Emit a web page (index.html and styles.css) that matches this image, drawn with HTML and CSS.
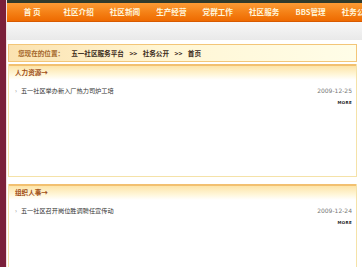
FILE: index.html
```html
<!DOCTYPE html>
<html lang="zh">
<head>
<meta charset="utf-8">
<title>五一社区服务平台 - 社务公开</title>
<link rel="stylesheet" href="styles.css">
</head>
<body>
<div class="page">
  <div class="strip"></div>
  <div class="main">
    <div class="banner"></div>
    <nav class="nav">
      <a class="nav-item">首&nbsp;页</a>
      <a class="nav-item">社区介绍</a>
      <a class="nav-item">社区新闻</a>
      <a class="nav-item">生产经营</a>
      <a class="nav-item">党群工作</a>
      <a class="nav-item">社区服务</a>
      <a class="nav-item">BBS管理</a>
      <a class="nav-item">社务公开</a>
    </nav>
    <div class="subbar"></div>
    <div class="content">
      <div class="crumb">
        <span class="crumb-label">您现在的位置：</span>
        <span class="crumb-path">五一社区服务平台 &gt;&gt; 社务公开 &gt;&gt; 首页</span>
      </div>
      <section class="box box-first">
        <div class="box-head">人力资源→</div>
        <div class="item">
          <span class="item-title"><span class="bullet">›</span>五一社区举办新入厂热力司炉工培</span>
          <span class="item-date">2009-12-25</span>
        </div>
        <div class="more-row"><span class="more">MORE</span></div>
      </section>
      <section class="box box-second">
        <div class="box-head">组织人事→</div>
        <div class="item">
          <span class="item-title"><span class="bullet">›</span>五一社区召开岗位胜调聘任宣传动</span>
          <span class="item-date">2009-12-24</span>
        </div>
        <div class="more-row"><span class="more">MORE</span></div>
      </section>
    </div>
  </div>
</div>
</body>
</html>
```
FILE: styles.css
```css
html, body {
  margin: 0;
  padding: 0;
  background: #ffffff;
  font-family: "Noto Sans CJK SC", "Noto Sans", sans-serif;
}
.page {
  display: flex;
  min-height: 267px;
}
.strip {
  width: 6px;
  flex: none;
  background: #7b1f3a;
  border-right: 1px solid #f3dede;
}
.main {
  flex: 1;
  min-width: 0;
  overflow: hidden;
}
.banner {
  height: 3px;
  background: #2f3a2c;
}
.nav {
  height: 19px;
  display: flex;
  align-items: center;
  padding-left: 2px;
  background: linear-gradient(#fb9b35, #f47d12 60%, #ee6a00);
  border-bottom: 1px solid #d85a00;
  box-sizing: border-box;
  white-space: nowrap;
}
.nav-item {
  flex: none;
  width: 46.4px;
  text-align: center;
  font-size: 7.6px;
  font-weight: bold;
  color: #fff6dc;
  line-height: 1;
}
.subbar {
  height: 18px;
  background: linear-gradient(#f7f7f7, #e9e9e9);
}
.content {
  padding: 4px 5px 0 1px;
}
.crumb {
  height: 18px;
  box-sizing: border-box;
  border: 1px solid #f3c678;
  background: linear-gradient(90deg, #fbe2b0, #fff6d4 45%, #fffde8);
  display: flex;
  align-items: center;
  padding-left: 9px;
  font-size: 6.6px;
  font-weight: bold;
  white-space: nowrap;
}
.crumb-label {
  color: #a4662a;
  margin-right: 7px;
}
.crumb-path {
  color: #3a2a1a;
  word-spacing: 4px;
}
.box {
  margin-top: 2px;
  border-left: 1px solid #f5e2a8;
  border-right: 1px solid #f5e2a8;
  border-bottom: 1px solid #f5e2a8;
}
.box-first {
  height: 113px;
  box-sizing: border-box;
}
.box-second {
  margin-top: 7px;
  height: 90px;
}
.box-head {
  height: 16px;
  box-sizing: border-box;
  border-top: 2px solid #f2c070;
  background: linear-gradient(#fde4a8, #fff6d8 60%, #ffffff);
  padding-left: 6px;
  padding-top: 3px;
  font-size: 6.6px;
  font-weight: bold;
  color: #a04e16;
  line-height: 1;
}
.item {
  display: flex;
  justify-content: space-between;
  align-items: center;
  margin-top: 6px;
  padding: 0 4px 0 6px;
  height: 9px;
}
.item-title {
  font-size: 6.2px;
  color: #333333;
}
.bullet {
  color: #888888;
  margin-right: 4px;
}
.item-date {
  font-size: 6px;
  color: #777777;
  font-family: "DejaVu Sans", sans-serif;
}
.more-row {
  display: flex;
  justify-content: flex-end;
  padding-right: 4px;
  margin-top: 5px;
}
.more {
  font-family: "DejaVu Sans", sans-serif;
  font-size: 4px;
  font-weight: bold;
  color: #222222;
  letter-spacing: 0.3px;
}
```
